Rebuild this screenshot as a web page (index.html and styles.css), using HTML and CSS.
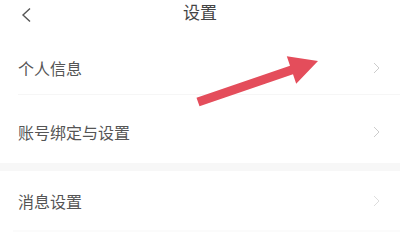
FILE: index.html
```html
<!DOCTYPE html>
<html lang="zh-CN">
<head>
  <meta charset="UTF-8">
  <title>设置</title>
  <meta name="viewport" content="width=device-width, initial-scale=1.0">
  <link rel="stylesheet" href="styles.css">
</head>
<body>
<div class="page">
  <header class="topbar">
    <a class="back" href="#">
      <svg width="12" height="16" viewBox="0 0 12 16"><path d="M10 1.5 L3 8 L10 14.5" fill="none" stroke="#555" stroke-width="1.4"/></svg>
    </a>
    <h1>设置</h1>
  </header>

  <a class="row row-first" href="#">
    <span>个人信息</span>
    <svg class="chev" width="7" height="12" viewBox="0 0 7 12"><path d="M1 1 L6 6 L1 11" fill="none" stroke="#ccc" stroke-width="1"/></svg>
  </a>
  <div class="line"></div>
  <a class="row row-second" href="#">
    <span>账号绑定与设置</span>
    <svg class="chev" width="7" height="12" viewBox="0 0 7 12"><path d="M1 1 L6 6 L1 11" fill="none" stroke="#ccc" stroke-width="1"/></svg>
  </a>
  <div class="band"></div>
  <a class="row row-third" href="#">
    <span>消息设置</span>
    <svg class="chev" width="7" height="12" viewBox="0 0 7 12"><path d="M1 1 L6 6 L1 11" fill="none" stroke="#ddd" stroke-width="1"/></svg>
  </a>
  <div class="line line-wide"></div>

  <!-- red annotation arrow over the list -->
  <svg class="mark" width="400" height="244" viewBox="0 0 400 244">
    <polygon points="196.5,97.7 290,65.7 286.8,56.3 318,61 296.2,83.7 293,74.3 199.5,106.3" fill="#e44d5b"/>
  </svg>
</div>
</body>
</html>
```

FILE: styles.css
```css
body {
  margin: 0;
  background: #fff;
  font-family: "Noto Sans CJK SC", "Noto Sans", sans-serif;
  color: #555;
}
.page {
  position: relative;
  width: 400px;
}
.topbar {
  height: 40px;
  display: flex;
  justify-content: center;
  position: relative;
}
.topbar h1 {
  margin: 0;
  font-size: 17px;
  font-weight: normal;
  line-height: 24px;
  color: #444;
}
.back {
  position: absolute;
  left: 20px;
  top: 4px;
}
.row {
  display: flex;
  align-items: center;
  justify-content: space-between;
  padding: 0 20px 0 18px;
  text-decoration: none;
  color: #555;
  font-size: 16px;
}
.row-first {
  height: 53px;
  padding-top: 1px;
}
.row-second {
  height: 63px;
  padding-top: 5px;
}
.row-third {
  height: 59px;
}
.line {
  height: 1px;
  margin-left: 18px;
  background: #f6f6f6;
}
.line-wide {
  margin-left: 13px;
  height: 2px;
  background: #fbfbfb;
}
.band {
  height: 8px;
  background: #f7f7f7;
}
.mark {
  position: absolute;
  left: 0;
  top: 0;
}
```
